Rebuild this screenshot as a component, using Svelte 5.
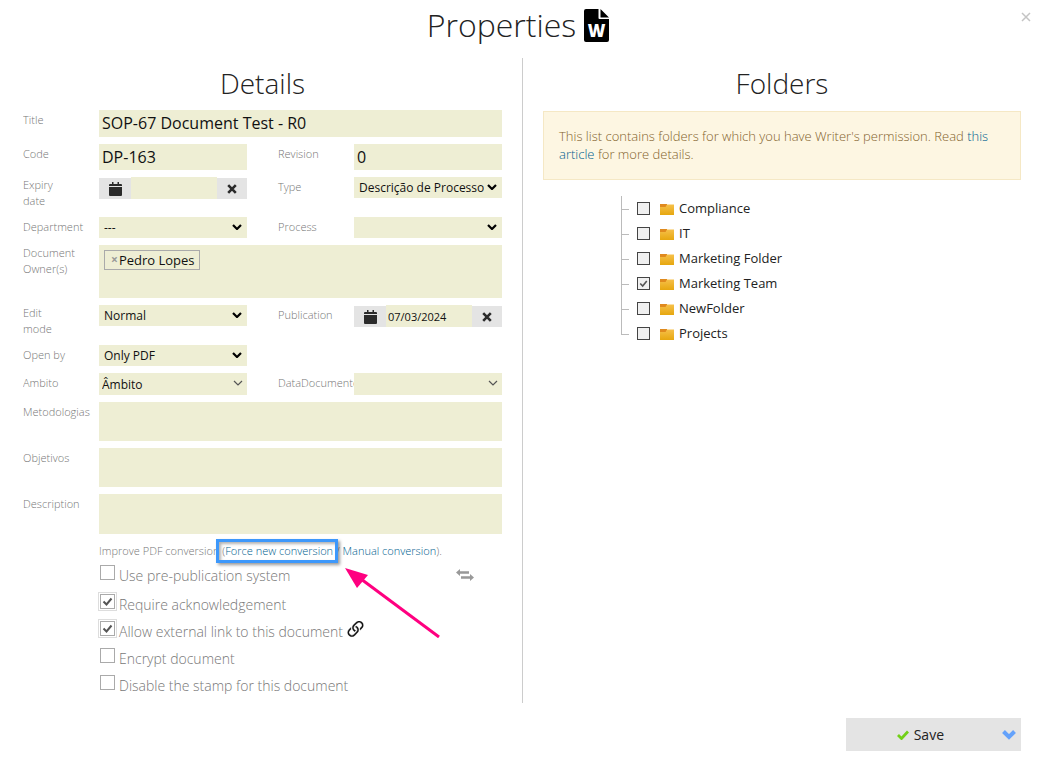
<script lang="ts">
  interface Folder {
    name: string;
    checked: boolean;
  }

  interface Option {
    id: string;
    label: string;
    checked: boolean;
    icon?: 'swap' | 'link';
  }

  let form = $state({
    title: 'SOP-67 Document Test - R0',
    code: 'DP-163',
    revision: '0',
    expiry: '',
    publication: '07/03/2024',
    metodologias: '',
    objetivos: '',
    description: ''
  });

  let owners = $state(['Pedro Lopes']);

  let options: Option[] = $state([
    { id: 'prepub', label: 'Use pre-publication system', checked: false, icon: 'swap' },
    { id: 'ack', label: 'Require acknowledgement', checked: true },
    { id: 'external', label: 'Allow external link to this document', checked: true, icon: 'link' },
    { id: 'encrypt', label: 'Encrypt document', checked: false },
    { id: 'stamp', label: 'Disable the stamp for this document', checked: false }
  ]);

  let folders: Folder[] = $state([
    { name: 'Compliance', checked: false },
    { name: 'IT', checked: false },
    { name: 'Marketing Folder', checked: false },
    { name: 'Marketing Team', checked: true },
    { name: 'NewFolder', checked: false },
    { name: 'Projects', checked: false }
  ]);

  function removeOwner(name: string) {
    owners = owners.filter((o) => o !== name);
  }
</script>

{#snippet selectBox(id: string, value: string, thin: boolean)}
  <div class="select-wrap" class:thin>
    <select {id}>
      <option>{value}</option>
    </select>
    <svg class="arrow" viewBox="0 0 10 6" width="10" height="6">
      <path d="M1 1l4 4 4-4" fill="none" stroke={thin ? '#555' : '#000'} stroke-width={thin ? 1.2 : 2.2} />
    </svg>
  </div>
{/snippet}

{#snippet dateBox(id: string, key: 'expiry' | 'publication')}
  <div class="date">
    <button class="date-btn open" aria-label="Open calendar">
      <svg viewBox="0 0 13 14" width="13" height="14">
        <path d="M1 2h2V0h1.500v2h4V0H10v2h2a1 1 0 0 1 1 1v1H0V3a1 1 0 0 1 1-1zM0 5h13v8a1 1 0 0 1-1 1H1a1 1 0 0 1-1-1z" fill="#2b2b2b" />
      </svg>
    </button>
    <input {id} type="text" bind:value={form[key]} />
    <button class="date-btn clear" aria-label="Clear date" onclick={() => (form[key] = '')}>
      <svg viewBox="0 0 10 10" width="10" height="10">
        <path d="M1.200 1.200l7.600 7.600M8.800 1.200L1.200 8.800" stroke="#2b2b2b" stroke-width="2.600" />
      </svg>
    </button>
  </div>
{/snippet}

<div class="dialog">
  <header>
    <h1>Properties</h1>
    <svg viewBox="0 0 25 33" width="25" height="33">
      <path d="M2 0h12.500v9a1 1 0 0 0 1 1H25v21a2 2 0 0 1-2 2H2a2 2 0 0 1-2-2V2a2 2 0 0 1 2-2zM16.500 0L25 8.500h-8.500z" fill="#000" />
      <text x="12.500" y="28" text-anchor="middle" class="word">W</text>
    </svg>
    <button class="close" aria-label="Close">
      <svg viewBox="0 0 10 10" width="10" height="10">
        <path d="M1 1l8 8M9 1L1 9" stroke="#c4c4c4" stroke-width="1.500" />
      </svg>
    </button>
  </header>

  <main>
    <section class="details">
      <h2>Details</h2>
      <div class="form">
        <label for="title">Title</label>
        <input id="title" class="big wide" type="text" bind:value={form.title} />

        <label for="code">Code</label>
        <input id="code" class="big" type="text" bind:value={form.code} />
        <label for="revision" class="second">Revision</label>
        <input id="revision" class="big" type="text" bind:value={form.revision} />

        <label for="expiry" class="double">Expiry<br />date</label>
        {@render dateBox('expiry', 'expiry')}
        <label for="type" class="second">Type</label>
        {@render selectBox('type', 'Descrição de Processo', false)}

        <label for="department">Department</label>
        {@render selectBox('department', '---', false)}
        <label for="process" class="second">Process</label>
        {@render selectBox('process', '', false)}

        <span class="label double">Document<br />Owner(s)</span>
        <div class="owners wide">
          {#each owners as owner}
            <span class="tag">
              <button aria-label="Remove {owner}" onclick={() => removeOwner(owner)}>×</button>{owner}
            </span>
          {/each}
        </div>

        <label for="edit" class="double">Edit<br />mode</label>
        {@render selectBox('edit', 'Normal', false)}
        <label for="publication" class="second">Publication</label>
        {@render dateBox('publication', 'publication')}

        <label for="open">Open by</label>
        {@render selectBox('open', 'Only PDF', false)}
        <span class="rest"></span>

        <label for="ambito">Ambito</label>
        {@render selectBox('ambito', 'Âmbito', true)}
        <label for="datadoc" class="second">DataDocumento</label>
        {@render selectBox('datadoc', '', true)}

        <label for="metodologias">Metodologias</label>
        <textarea id="metodologias" class="wide" bind:value={form.metodologias}></textarea>

        <label for="objetivos">Objetivos</label>
        <textarea id="objetivos" class="wide" bind:value={form.objetivos}></textarea>

        <label for="description">Description</label>
        <textarea id="description" class="wide tall" bind:value={form.description}></textarea>
      </div>

      <div class="extras">
        <p class="improve">
          Improve PDF conversion <span class="marked">(<a href="#force">Force new conversion</a><span class="marker"></span><svg class="pointer" viewBox="0 0 96 70" width="96" height="70">
              <path d="M16 11L94 69" stroke="#ff0080" stroke-width="3" />
              <path d="M0 0L23 7 12 20z" fill="#ff0080" />
            </svg></span> / <a href="#manual">Manual conversion</a>).
        </p>
        {#each options as opt (opt.id)}
          <div class="option">
            <input id={opt.id} type="checkbox" bind:checked={opt.checked} />
            <label for={opt.id}>{opt.label}</label>
            {#if opt.icon === 'swap'}
              <svg class="swap" viewBox="0 0 18 12" width="18" height="12">
                <path d="M0 3.500L4 0v2.300h9v2.400H4V7zM18 8.500L14 5v2.300H5v2.400h9V12z" fill="#999" />
              </svg>
            {:else if opt.icon === 'link'}
              <svg class="link" viewBox="2 2 12 12" width="17" height="17">
                <g fill="#111" stroke="#111" stroke-width="0.200">
                  <path d="M4.715 6.542 3.343 7.914a3 3 0 1 0 4.243 4.243l1.828-1.829A3 3 0 0 0 8.586 5.500L8 6.086a1 1 0 0 0-.154.199 2 2 0 0 1 .861 3.337L6.880 11.450a2 2 0 1 1-2.830-2.830l.793-.792a4 4 0 0 1-.128-1.287z" />
                  <path d="M6.586 4.672A3 3 0 0 0 7.414 9.500l.775-.776a2 2 0 0 1-.896-3.346L9.120 3.550a2 2 0 1 1 2.830 2.830l-.793.792c.112.420.155.855.128 1.287l1.372-1.372a3 3 0 1 0-4.243-4.243z" />
                </g>
              </svg>
            {/if}
          </div>
        {/each}
      </div>
    </section>

    <section class="folders">
      <h2>Folders</h2>
      <p class="notice">
        This list contains folders for which you have Writer's permission. Read <a href="#article">this article</a> for more details.
      </p>
      <ul class="tree">
        {#each folders as folder, i (folder.name)}
          <li>
            <input id="folder-{i}" type="checkbox" bind:checked={folder.checked} />
            <svg viewBox="0 0 14 12" width="14" height="12">
              <defs>
                <linearGradient id="fg-{i}" x1="0" y1="0" x2="0" y2="1">
                  <stop offset="0" stop-color="#f6c04a" />
                  <stop offset="1" stop-color="#e6a70f" />
                </linearGradient>
              </defs>
              <path d="M0 1h7v4H0z" fill="#e08a1e" />
              <path d="M0 4h5.500l1.500-2.500h7V12H0z" fill="url(#fg-{i})" />
            </svg>
            <label for="folder-{i}">{folder.name}</label>
          </li>
        {/each}
      </ul>
    </section>
  </main>

  <footer>
    <button class="save">
      <svg class="tick" viewBox="0 0 12 10" width="12" height="10">
        <path d="M1 5l3.500 3.500L11 1.500" fill="none" stroke="#72d018" stroke-width="2.800" />
      </svg>
      Save
    </button>
    <button class="more" aria-label="More save options">
      <svg viewBox="0 0 14 10" width="14" height="10">
        <path d="M1.500 1.500L7 7l5.500-5.500" fill="none" stroke="#64a2fb" stroke-width="4" />
      </svg>
    </button>
  </footer>
</div>

<style>
  :global(body) {
    margin: 0;
    background: #fff;
  }

  .dialog {
    font-family: 'Open Sans', 'Noto Sans', sans-serif;
    font-weight: 300;
    color: #222;
    padding: 0 22px 8px 23px;
  }

  .dialog :is(input, select, textarea, button) {
    font-family: inherit;
    border: 0;
    border-radius: 0;
    margin: 0;
    padding: 0;
    box-sizing: border-box;
    outline: none;
  }

  .dialog button {
    cursor: pointer;
  }

  a {
    color: #00618f;
    text-decoration: none;
  }

  header {
    position: relative;
    display: flex;
    justify-content: center;
    align-items: center;
    gap: 8px;
    height: 50px;
    padding: 0 8px 8px 0;
  }

  h1,
  h2 {
    margin: 0;
    font-weight: 300;
    text-align: center;
  }

  h1 {
    font-size: 32px;
    line-height: 50px;
  }

  h2 {
    padding-bottom: 2px;
    font-size: 28px;
    line-height: 50px;
  }

  .word {
    font-size: 17px;
    font-weight: 800;
    fill: #fff;
  }

  .close {
    position: absolute;
    top: 12px;
    right: -10px;
    display: flex;
    background: none;
  }

  main {
    display: grid;
    grid-template-columns: 500fr 498fr;
  }

  .details {
    border-right: 1px solid #ccc;
    padding: 0 20px 4px 0;
  }

  .folders {
    padding-left: 20px;
  }

  .form {
    display: grid;
    grid-template-columns: 76px 1fr 107px 1fr;
    row-gap: 7px;
    align-items: start;
  }

  .form > label,
  .form > .label {
    font-size: 11px;
    line-height: 16px;
    padding-top: 2px;
    color: #777;
    white-space: nowrap;
    overflow: hidden;
  }

  .form > .double {
    padding: 0 0 1px;
  }

  .form > .second {
    padding-left: 31px;
  }

  .wide {
    grid-column: span 3;
  }

  .rest {
    grid-column: span 2;
  }

  .form input,
  .form select,
  .form textarea,
  .owners {
    width: 100%;
    background: #eeeed4;
    color: #111;
  }

  .form input.big {
    height: 26px;
    padding: 0 3px;
    font-size: 16px;
    font-weight: 400;
  }

  .form input.big.wide {
    height: 27px;
    padding-bottom: 2px;
  }

  .date {
    display: grid;
    grid-template-columns: 32px 1fr 30px;
    height: 22px;
    align-items: end;
  }

  .form .date input {
    height: 22px;
    padding: 0 2px;
    font-size: 11px;
    font-weight: 400;
  }

  .date-btn {
    height: 21px;
    display: flex;
    align-items: center;
    justify-content: center;
    background: #e4e4e4;
  }

  .select-wrap {
    position: relative;
  }

  .select-wrap select {
    display: block;
    height: 21px;
    padding: 0 18px 0 5px;
    font-size: 12px;
    font-weight: 400;
    appearance: none;
  }

  .select-wrap.thin select {
    height: 22px;
    padding-left: 3px;
  }

  .arrow {
    position: absolute;
    right: 5px;
    top: 7px;
    pointer-events: none;
  }

  .thin .arrow {
    right: 4px;
  }

  .owners {
    display: flex;
    align-items: flex-start;
    gap: 4px;
    height: 53px;
    padding: 5px;
    box-sizing: border-box;
  }

  .tag {
    display: flex;
    align-items: center;
    height: 18px;
    padding: 0 4px 0 6px;
    border: 1px solid #aaa;
    font-size: 13px;
    font-weight: 400;
  }

  .dialog .tag button {
    background: none;
    color: #999;
    font-size: 12px;
    font-weight: 700;
    line-height: 18px;
    padding-right: 1px;
  }

  .form textarea {
    display: block;
    height: 39px;
    resize: none;
  }

  .form textarea.tall {
    height: 40px;
  }

  .extras {
    padding: 8px 0 0 76px;
  }

  .improve {
    margin: 0 0 2px;
    font-size: 11px;
    line-height: 18px;
    color: #777;
    white-space: nowrap;
  }

  .marked {
    position: relative;
  }

  /* highlight frame laid over the link */
  .marker {
    position: absolute;
    inset: -4px -5px -5px -6px;
    border: 3px solid #3d98fb;
    box-shadow: 2px 2px 3px rgba(0, 0, 0, 0.4), inset 2px 2px 3px rgba(0, 0, 0, 0.3);
    pointer-events: none;
  }

  .pointer {
    position: absolute;
    left: 100%;
    top: 100%;
    margin: 10px 0 0 12px;
    pointer-events: none;
  }

  .option {
    display: flex;
    align-items: center;
    gap: 4px;
    height: 27px;
    font-size: 14px;
    color: #777;
  }

  .option:first-of-type {
    margin-bottom: 2px;
  }

  input[type='checkbox'] {
    appearance: none;
    flex: none;
  }

  .option input {
    width: 15px;
    height: 15px;
    margin: 0 0 6px 1px;
    border: 1px solid #aaa;
    background: #fff center / 11px 11px no-repeat;
  }

  .option input:checked {
    box-shadow: 0 0 0 1px #fff, 0 0 0 2px #ddd;
  }

  input[type='checkbox']:checked {
    background-image: url("data:image/svg+xml,%3Csvg xmlns='http://www.w3.org/2000/svg' viewBox='0 0 11 11'%3E%3Cpath d='M1.500 5.500l3 3 5-6' fill='none' stroke='%23555' stroke-width='2'/%3E%3C/svg%3E");
  }

  .swap {
    margin: 0 28px 2px auto;
  }

  .link {
    margin-bottom: 4px;
  }

  .notice {
    margin: 1px 0 16px;
    padding: 15px 15px 16px;
    border: 1px solid #f5e8c5;
    background: #fdf6e2;
    color: #83622c;
    font-size: 13px;
    line-height: 18px;
  }

  .tree {
    list-style: none;
    margin: 0 0 0 78px;
    padding: 0;
  }

  .tree li {
    position: relative;
    display: flex;
    align-items: center;
    height: 25px;
    padding-left: 16px;
    font-size: 13px;
    font-weight: 400;
  }

  .tree li::before {
    content: '';
    position: absolute;
    left: 0;
    top: 0;
    width: 1px;
    height: 100%;
    background: #bbb;
  }

  .tree li:last-child::before {
    height: 50%;
  }

  .tree li::after {
    content: '';
    position: absolute;
    left: 0;
    top: 50%;
    width: 8px;
    height: 1px;
    background: #bbb;
  }

  .tree input {
    width: 13px;
    height: 13px;
    margin-right: 10px;
    border: 1px solid #444;
    background: #f0f0f0 center / 9px 9px no-repeat;
  }

  .tree svg {
    margin-right: 5px;
  }

  .tree label {
    padding-bottom: 2px;
  }

  footer {
    display: flex;
    justify-content: flex-end;
    padding-top: 15px;
  }

  .save,
  .dialog .more {
    display: flex;
    align-items: center;
    height: 33px;
    background: #e4e4e4;
    color: #222;
  }

  .dialog .save {
    gap: 5px;
    padding: 0 40px 0 51px;
    font-size: 14px;
    font-weight: 400;
  }

  .dialog .more {
    padding: 0 5px 0 18px;
  }
</style>
